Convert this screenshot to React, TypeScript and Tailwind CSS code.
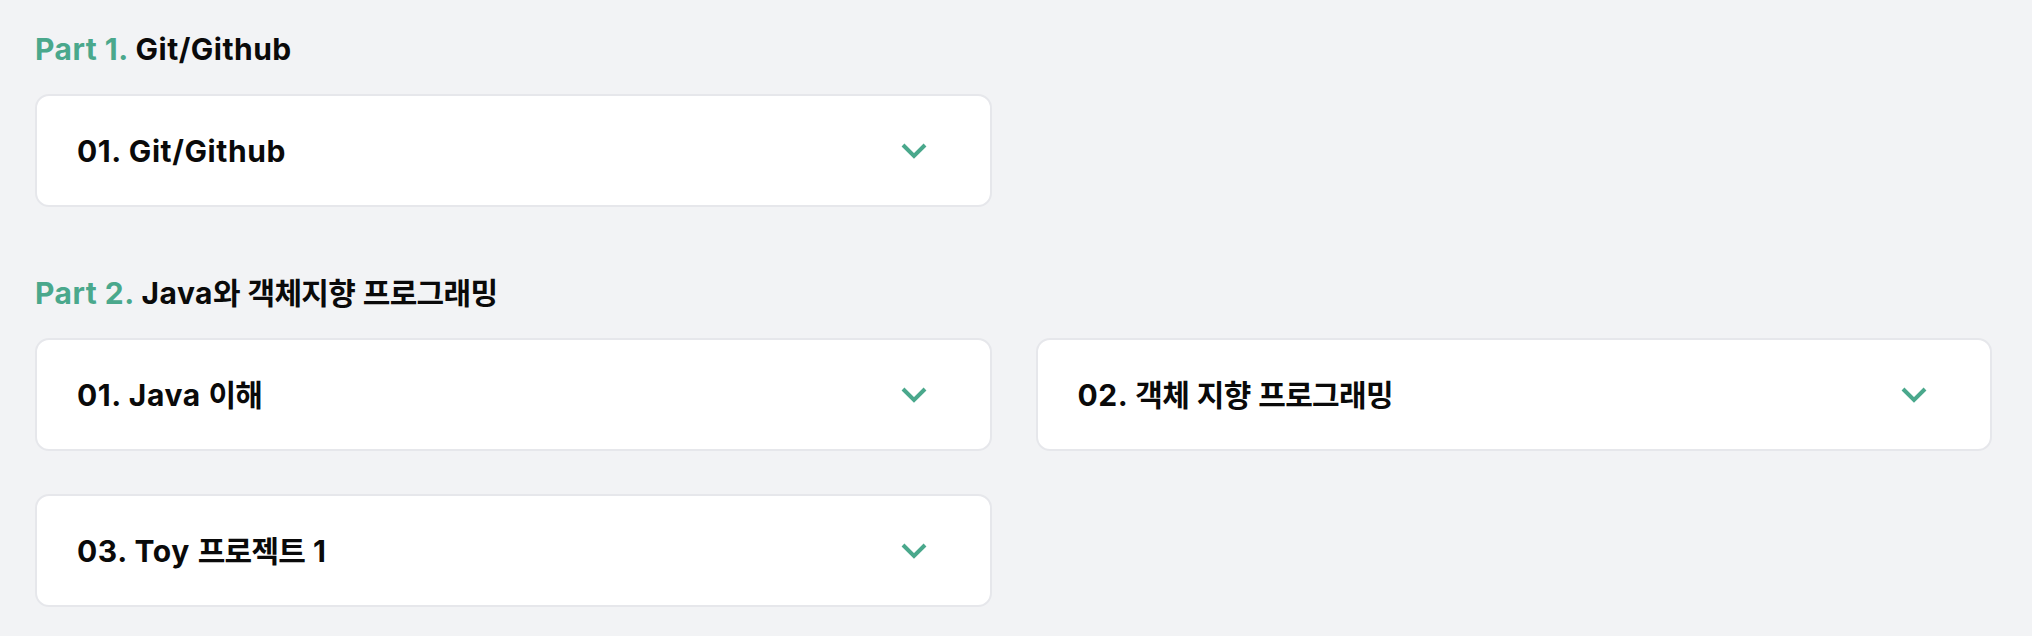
import React from "react";

const parts = [
  {
    label: "Part 1.",
    title: "Git/Github",
    chapters: ["01. Git/Github"],
  },
  {
    label: "Part 2.",
    title: "Java와 객체지향 프로그래밍",
    chapters: ["01. Java 이해", "02. 객체 지향 프로그래밍", "03. Toy 프로젝트 1"],
  },
];

// hangul runs are set a bit tighter than latin ones
function Mixed({ text }: { text: string }) {
  const runs = text.split(/([\uAC00-\uD7A3]+)/).filter(Boolean);
  return (
    <>
      {runs.map((r, i) =>
        /[\uAC00-\uD7A3]/.test(r) ? (
          <span key={i} className="tracking-[-0.7px]">
            {r}
          </span>
        ) : (
          <span key={i}>{r}</span>
        )
      )}
    </>
  );
}

function Chevron() {
  return (
    <svg width="28" height="18" viewBox="0 0 28 18" fill="none" className="shrink-0">
      <path
        d="M3 3 L14 14 L25 3"
        stroke="#4aa88c"
        strokeWidth="4"
        strokeLinecap="butt"
        strokeLinejoin="miter"
      />
    </svg>
  );
}

function ChapterCard({ title }: { title: string }) {
  return (
    <div className="h-[113px] flex items-center justify-between pl-[40px] pr-[62px] bg-white border-2 border-[#e6e7eb] rounded-[14px]">
      <h3 className="text-[30px] leading-[36px] font-bold text-[#0a0a0a] tracking-[0.6px]">
        <Mixed text={title} />
      </h3>
      <Chevron />
    </div>
  );
}

export default function App() {
  return (
    <main
      className="min-h-[636px] bg-[#f2f3f5] pl-[35px] pr-[40px] pt-[31px]"
      style={{ fontFamily: 'Inter, "Noto Sans CJK KR", sans-serif' }}
    >
      {parts.map((part, idx) => (
        <section key={idx} className={idx > 0 ? "mt-[68px]" : ""}>
          <h2 className="text-[30px] leading-[36px] font-bold text-[#0a0a0a] mb-[27px] tracking-[0.5px]">
            <span className="text-[#4aa88c]">{part.label}</span> <Mixed text={part.title} />
          </h2>
          <div className="grid grid-cols-2 gap-x-[44px] gap-y-[43px]">
            {part.chapters.map((c) => (
              <ChapterCard key={c} title={c} />
            ))}
          </div>
        </section>
      ))}
    </main>
  );
}
